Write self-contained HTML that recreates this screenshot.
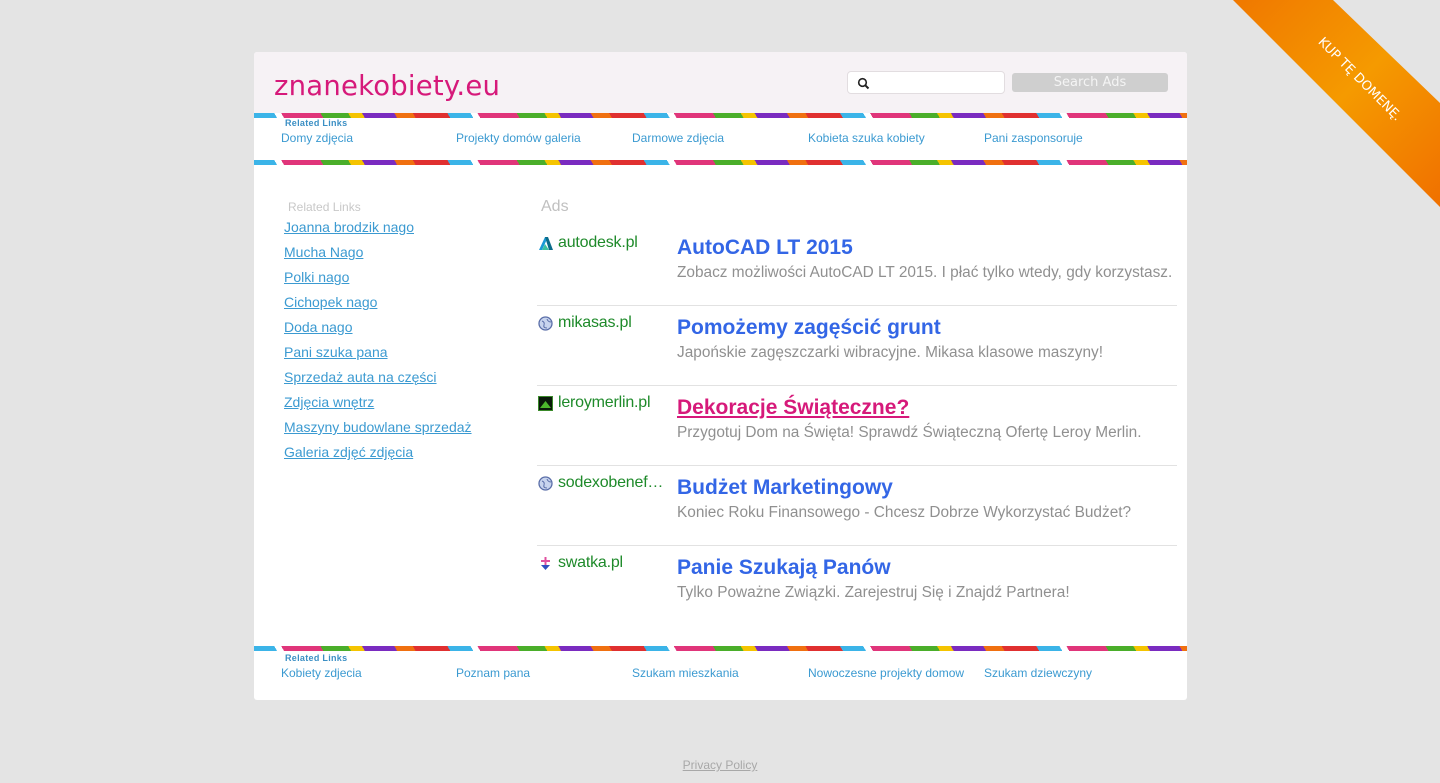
<!DOCTYPE html>
<html><head><meta charset="utf-8"><style>
*{margin:0;padding:0;box-sizing:border-box}
body{width:1440px;height:783px;background:#e4e4e4;font-family:"Liberation Sans",Arial,sans-serif;position:relative;overflow:hidden}
.card{position:absolute;left:254px;top:52px;width:933px;height:648px;background:#fff;border-radius:3px;overflow:hidden}
.head{height:61px;background:#f6f2f5;position:relative}
.title{position:absolute;left:20px;top:18px;font-family:"DejaVu Sans",sans-serif;font-size:27.5px;color:#d6197a;letter-spacing:0.2px}
.sbox{position:absolute;left:593px;top:19px;width:158px;height:23px;background:#fff;border:1px solid #e2dde0;border-radius:4px}
.sbtn{position:absolute;left:758px;top:21px;width:156px;height:19px;background:#cfcfcf;border-radius:3px;color:#f4f4f4;font-family:"DejaVu Sans",sans-serif;font-size:13px;text-align:center;line-height:19px}
.stripe{height:5px;background:repeating-linear-gradient(60deg,#3bb4e8 0 20px,#fff 20px 26px,#e0357a 26px 60px,#4aae2a 60px 84px,#f5c400 84px 96px,#7a2bc0 96px 124px,#f07010 124px 140px,#e03030 140px 170px)}
.rl{height:42px;position:relative}
.rl .lab{position:absolute;left:31px;top:0;font-size:9px;color:#3b8fc4;font-weight:bold;letter-spacing:0.3px}
.rl a{position:absolute;top:13px;font-size:12px;color:#3b9ad1;text-decoration:none}
.left{position:absolute;left:30px;top:148px}
.left .h{font-size:12px;color:#c8c8c8;margin-left:4px;margin-bottom:4px}
.left a{display:block;font-size:14px;color:#3b9ad1;text-decoration:underline;height:25px;line-height:18px}
.ads{position:absolute;left:283px;top:146px;width:640px}
.ads .h{font-size:16px;color:#c0c0c0;margin-left:4px;height:28px}
.ad{height:80px;border-bottom:1px solid #e2e2e2;position:relative}
.ad:last-child{border:none}
.dom{position:absolute;left:21px;top:8px;font-size:16px;color:#1e8a2a;letter-spacing:-0.2px}
.ic{position:absolute;left:1px;top:10px;width:15px;height:15px}
.t{position:absolute;left:140px;top:10px;font-size:21px;font-weight:bold;color:#3366e6}
.d{position:absolute;left:140px;top:38px;font-size:15.4px;color:#909090;white-space:nowrap}
.pp{position:absolute;top:758px;left:0;width:1440px;text-align:center;font-size:12px;color:#a8a8a8;text-decoration:underline}
</style></head><body>
<div class="card">
<div class="head"><div class="title">znanekobiety.eu</div>
<div class="sbox"><svg width="14" height="14" style="position:absolute;left:9px;top:5px" viewBox="0 0 14 14"><circle cx="5.5" cy="5.5" r="3.8" fill="none" stroke="#222" stroke-width="1.6"/><path d="M8.3 8.3L11.5 11.5" stroke="#222" stroke-width="2"/></svg></div>
<div class="sbtn">Search Ads</div></div>
<div class="stripe"></div>
<div class="rl"><div class="lab">Related Links</div>
<a style="left:27px">Domy zdjęcia</a><a style="left:202px">Projekty domów galeria</a><a style="left:378px">Darmowe zdjęcia</a><a style="left:554px">Kobieta szuka kobiety</a><a style="left:730px">Pani zasponsoruje</a></div>
<div class="stripe"></div>
<div class="left"><div class="h">Related Links</div>
<a>Joanna brodzik nago</a><a>Mucha Nago</a><a>Polki nago</a><a>Cichopek nago</a><a>Doda nago</a><a>Pani szuka pana</a><a>Sprzedaż auta na części</a><a>Zdjęcia wnętrz</a><a>Maszyny budowlane sprzedaż</a><a>Galeria zdjęć zdjęcia</a></div>
<div class="ads"><div class="h">Ads</div>
<div class="ad"><svg class="ic" viewBox="0 0 15 15"><path d="M1 14L7 1h3L4 14z" fill="#1a9ad6"/><path d="M7 1h3l5 13h-4z" fill="#0b6c8a"/><path d="M4 14l3-6 4 6z" fill="#3cc0a0"/></svg><div class="dom">autodesk.pl</div><div class="t">AutoCAD LT 2015</div><div class="d">Zobacz możliwości AutoCAD LT 2015. I płać tylko wtedy, gdy korzystasz.</div></div>
<div class="ad"><svg class="ic" viewBox="0 0 15 15"><circle cx="7.5" cy="7.5" r="6.5" fill="#c8d4ee" stroke="#5a6ea8" stroke-width="1.3"/><path d="M4 5q3 1 2 4t3 3M9 3q1 3 4 3" stroke="#5a6ea8" fill="none"/></svg><div class="dom">mikasas.pl</div><div class="t">Pomożemy zagęścić grunt</div><div class="d">Japońskie zagęszczarki wibracyjne. Mikasa klasowe maszyny!</div></div>
<div class="ad"><svg class="ic" viewBox="0 0 15 15"><rect x="0.5" y="0.5" width="14" height="14" fill="#0a1a0a" stroke="#3a8a2a"/><path d="M2 12L7.5 5 13 12z" fill="#4cb82c"/></svg><div class="dom">leroymerlin.pl</div><div class="t" style="color:#d6197a;text-decoration:underline">Dekoracje Świąteczne?</div><div class="d">Przygotuj Dom na Święta! Sprawdź Świąteczną Ofertę Leroy Merlin.</div></div>
<div class="ad"><svg class="ic" viewBox="0 0 15 15"><circle cx="7.5" cy="7.5" r="6.5" fill="#c8d4ee" stroke="#5a6ea8" stroke-width="1.3"/><path d="M4 5q3 1 2 4t3 3M9 3q1 3 4 3" stroke="#5a6ea8" fill="none"/></svg><div class="dom">sodexobenef…</div><div class="t">Budżet Marketingowy</div><div class="d">Koniec Roku Finansowego - Chcesz Dobrze Wykorzystać Budżet?</div></div>
<div class="ad"><svg class="ic" viewBox="0 0 15 15"><path d="M7.5 1v8M3 5h9" stroke="#e050a0" stroke-width="2"/><path d="M3 9l4.5 5 4.5-5z" fill="#3050c0"/></svg><div class="dom">swatka.pl</div><div class="t">Panie Szukają Panów</div><div class="d">Tylko Poważne Związki. Zarejestruj Się i Znajdź Partnera!</div></div>
</div>
<div style="position:absolute;top:594px;left:0;width:933px">
<div class="stripe"></div>
<div class="rl" style="top:2px"><div class="lab">Related Links</div>
<a style="left:27px">Kobiety zdjecia</a><a style="left:202px">Poznam pana</a><a style="left:378px">Szukam mieszkania</a><a style="left:554px">Nowoczesne projekty domow</a><a style="left:730px">Szukam dziewczyny</a></div></div>
</div>
<svg style="position:absolute;left:0;top:0" width="1440" height="783"><defs><linearGradient id="g" x1="0" y1="0" x2="1" y2="1"><stop offset="0" stop-color="#f07800"/><stop offset="0.5" stop-color="#f59a00"/><stop offset="1" stop-color="#f07000"/></linearGradient></defs>
<polygon points="1233,0 1333,0 1440,103 1440,207" fill="url(#g)"/>
<text x="1357" y="82" transform="rotate(45 1357 82)" text-anchor="middle" font-family="DejaVu Sans,sans-serif" font-size="13" fill="#fff">KUP TĘ DOMENĘ.</text></svg>
<div class="pp">Privacy Policy</div>
</body></html>
